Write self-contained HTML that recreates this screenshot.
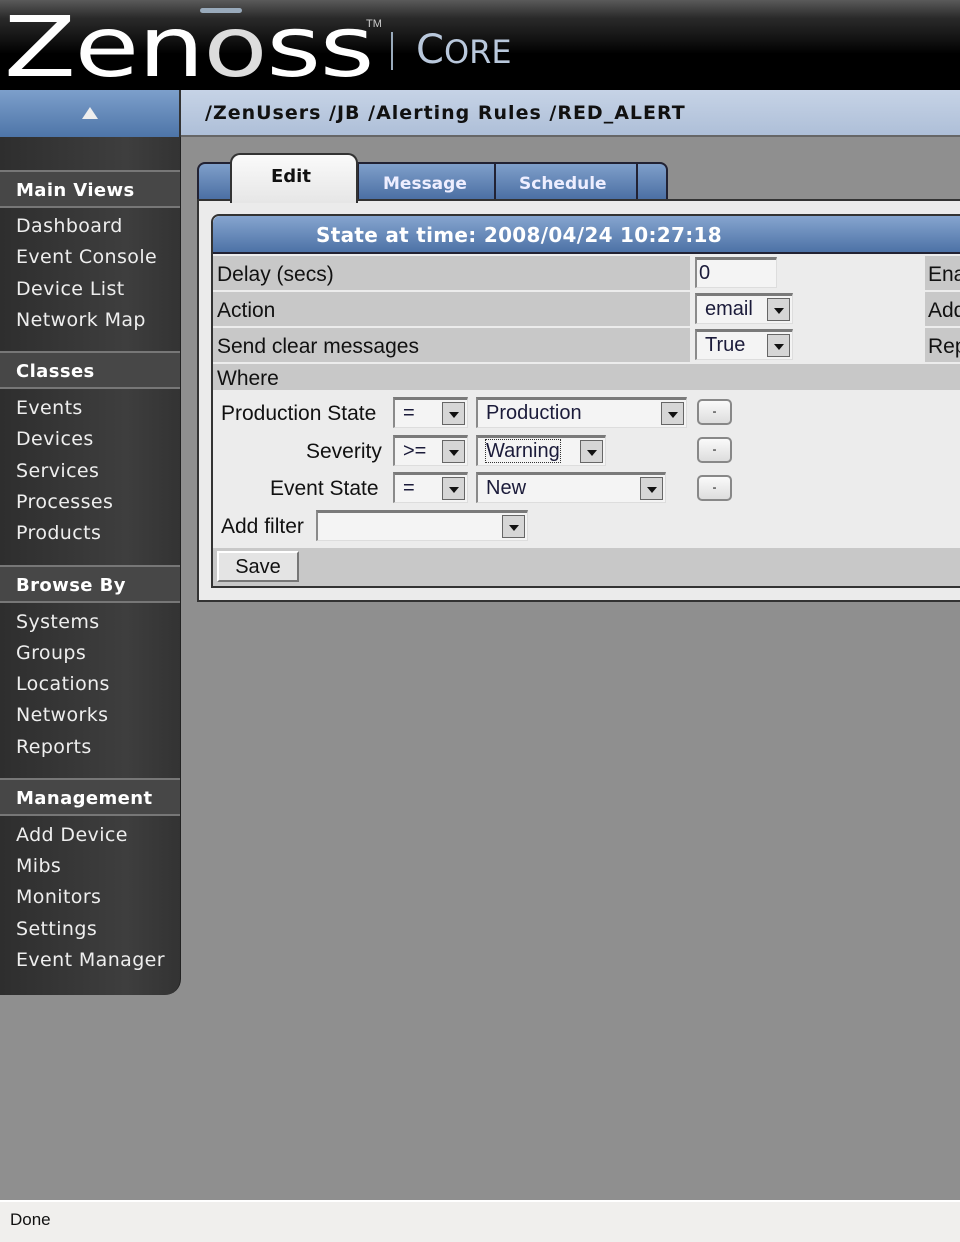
<!DOCTYPE html>
<html><head><meta charset="utf-8"><style>
*{margin:0;padding:0;box-sizing:border-box}
body{width:960px;height:1242px;position:relative;overflow:hidden;background:#8f8f8f;font-family:"Liberation Sans",sans-serif}
.a{position:absolute}
#hdr{left:0;top:0;width:960px;height:90px;background:linear-gradient(#5a5a5a 0%,#2a2a2a 20%,#111 45%,#000 60%,#000 100%)}
#side{left:0;top:137px;width:181px;height:858px;background:linear-gradient(90deg,#2e2e2e,#3e3e3e 70%,#333);border-bottom-right-radius:16px;border-right:1px solid #222;font-family:"DejaVu Sans",sans-serif;color:#eee}
.sh{position:absolute;left:0;width:180px;height:38px;background:#474747;border-top:2px solid #777;border-bottom:2px solid #777;font-weight:bold;font-size:18px;padding:8px 0 0 16px;color:#fff;letter-spacing:0.4px}
.si{position:absolute;left:16px;font-size:19px;color:#eee;letter-spacing:0.4px;margin-top:1px}
.sel{position:absolute;height:31px;background:#f4f4f4;border-top:3px solid #7a7a7a;border-left:2px solid #8a8a8a;border-right:1px solid #ddd;border-bottom:1px solid #ddd;font-size:20px;color:#1b1b3a;padding:2px 0 0 8px}
.arr{position:absolute;right:2px;top:2px;width:23px;height:23px;background:#d6d6d6;border:1px solid #666}
.arr:after{content:"";position:absolute;left:6px;top:9px;border-left:5px solid transparent;border-right:5px solid transparent;border-top:6px solid #111}
.btn{position:absolute;left:697px;width:35px;height:26px;border:2px solid #888;border-radius:5px;background:linear-gradient(#fafafa,#ddd);font-size:12px;text-align:center;line-height:20px}
.lbl{position:absolute;font-size:21px;color:#111;margin-top:1px}
</style></head><body>
<div id="hdr" class="a">
<div class="a" style="left:4px;top:2px;font-size:84px;color:#fff;font-family:'DejaVu Sans',sans-serif;line-height:90px;transform:scaleX(1.25);transform-origin:0 0;letter-spacing:-1px">Zen<span style="color:#ddd">o</span>ss</div>
<div class="a" style="left:200px;top:8px;width:42px;height:5px;background:#9ab;border-radius:3px"></div>
<div class="a" style="left:366px;top:18px;font-size:11px;color:#ccc">TM</div>
<div class="a" style="left:391px;top:32px;width:2px;height:38px;background:#9ab"></div>
<div class="a" style="left:416px;top:27px;font-size:40px;color:#b9c8dc;font-family:'DejaVu Sans',sans-serif">C<span style="font-size:32px">ORE</span></div>
</div>
<div class="a" style="left:0;top:90px;width:181px;height:47px;background:linear-gradient(#7d9fcb,#4e75a8);border-right:2px solid #333"></div>
<div class="a" style="left:82px;top:107px;border-left:8px solid transparent;border-right:8px solid transparent;border-bottom:12px solid #eee"></div>
<div class="a" style="left:181px;top:90px;width:779px;height:47px;background:linear-gradient(#c6d3e6,#aebfd8);border-bottom:2px solid #666"></div>
<div class="a" style="left:205px;top:102px;font-family:'DejaVu Sans',sans-serif;font-weight:bold;font-size:19px;letter-spacing:1px;color:#111">/ZenUsers /JB /Alerting Rules /RED_ALERT</div>
<div id="side" class="a">
<div class="sh" style="top:33px">Main Views</div>
<div class="si" style="top:77px">Dashboard</div><div class="si" style="top:108px">Event Console</div><div class="si" style="top:140px">Device List</div><div class="si" style="top:171px">Network Map</div>
<div class="sh" style="top:214px">Classes</div>
<div class="si" style="top:259px">Events</div><div class="si" style="top:290px">Devices</div><div class="si" style="top:322px">Services</div><div class="si" style="top:353px">Processes</div><div class="si" style="top:384px">Products</div>
<div class="sh" style="top:428px">Browse By</div>
<div class="si" style="top:473px">Systems</div><div class="si" style="top:504px">Groups</div><div class="si" style="top:535px">Locations</div><div class="si" style="top:566px">Networks</div><div class="si" style="top:598px">Reports</div>
<div class="sh" style="top:641px">Management</div>
<div class="si" style="top:686px">Add Device</div><div class="si" style="top:717px">Mibs</div><div class="si" style="top:748px">Monitors</div><div class="si" style="top:780px">Settings</div><div class="si" style="top:811px">Event Manager</div>
</div>
<div class="a" style="left:197px;top:162px;width:471px;height:40px;background:linear-gradient(#7f9fca,#4a6ea2);border:2px solid #223;border-radius:8px 8px 0 0"></div>
<div class="a" style="left:357px;top:164px;width:2px;height:36px;background:#223"></div>
<div class="a" style="left:494px;top:164px;width:2px;height:36px;background:#223"></div>
<div class="a" style="left:636px;top:164px;width:2px;height:36px;background:#223"></div>
<div class="a" style="left:383px;top:174px;font-family:'DejaVu Sans',sans-serif;font-weight:bold;font-size:17px;color:#eef">Message</div>
<div class="a" style="left:519px;top:174px;font-family:'DejaVu Sans',sans-serif;font-weight:bold;font-size:17px;color:#eef">Schedule</div>
<div class="a" style="left:197px;top:199px;width:770px;height:403px;background:#ebebeb;border:2px solid #333;border-right:none"></div>
<div class="a" style="left:230px;top:153px;width:128px;height:50px;background:linear-gradient(#fafafa,#e6e6e6);border:2px solid #333;border-bottom:none;border-radius:10px 10px 0 0"></div>
<div class="a" style="left:271px;top:166px;font-family:'DejaVu Sans',sans-serif;font-weight:bold;font-size:18px;color:#111">Edit</div>
<div class="a" style="left:211px;top:214px;width:760px;height:374px;background:#ececec;border:2px solid #333;border-right:none;border-radius:8px 0 0 0"></div>
<div class="a" style="left:213px;top:216px;width:750px;height:38px;background:linear-gradient(#86a5cf,#4d72a6);border-bottom:2px solid #223;border-radius:7px 0 0 0"></div>
<div class="a" style="left:316px;top:223px;font-family:'DejaVu Sans',sans-serif;font-weight:bold;font-size:20px;letter-spacing:0.3px;color:#fff">State at time: 2008/04/24 10:27:18</div>
<div class="a" style="left:213px;top:256px;width:477px;height:34px;background:#c8c8c8"></div>
<div class="a" style="left:213px;top:292px;width:477px;height:34px;background:#c8c8c8"></div>
<div class="a" style="left:213px;top:328px;width:477px;height:34px;background:#c8c8c8"></div>
<div class="a" style="left:925px;top:256px;width:40px;height:34px;background:#c8c8c8"></div>
<div class="a" style="left:925px;top:292px;width:40px;height:34px;background:#c8c8c8"></div>
<div class="a" style="left:925px;top:328px;width:40px;height:34px;background:#c8c8c8"></div>
<div class="a" style="left:213px;top:364px;width:750px;height:26px;background:#c8c8c8"></div>
<div class="a" style="left:213px;top:548px;width:750px;height:38px;background:#c8c8c8"></div>
<div class="lbl" style="left:217px;top:262px">Delay (secs)</div>
<div class="lbl" style="left:217px;top:298px">Action</div>
<div class="lbl" style="left:217px;top:334px">Send clear messages</div>
<div class="lbl" style="left:217px;top:366px">Where</div>
<div class="lbl" style="left:928px;top:262px">Ena</div>
<div class="lbl" style="left:928px;top:298px">Add</div>
<div class="lbl" style="left:928px;top:334px">Rep</div>
<div class="sel" style="left:695px;top:257px;width:82px;padding-left:2px">0</div>
<div class="sel" style="left:695px;top:293px;width:98px">email<div class="arr"></div></div>
<div class="sel" style="left:695px;top:329px;width:98px">True<div class="arr"></div></div>
<div class="lbl" style="left:221px;top:401px">Production State</div>
<div class="lbl" style="left:306px;top:439px">Severity</div>
<div class="lbl" style="left:270px;top:476px">Event State</div>
<div class="lbl" style="left:221px;top:514px">Add filter</div>
<div class="sel" style="left:393px;top:397px;width:75px">=<div class="arr"></div></div>
<div class="sel" style="left:393px;top:435px;width:75px">&gt;=<div class="arr"></div></div>
<div class="sel" style="left:393px;top:472px;width:75px">=<div class="arr"></div></div>
<div class="sel" style="left:476px;top:397px;width:211px">Production<div class="arr"></div></div>
<div class="sel" style="left:476px;top:435px;width:130px"><span style="outline:1px dotted #333">Warning</span><div class="arr"></div></div>
<div class="sel" style="left:476px;top:472px;width:190px">New<div class="arr"></div></div>
<div class="sel" style="left:316px;top:510px;width:212px"><div class="arr"></div></div>
<div class="btn" style="top:399px">-</div>
<div class="btn" style="top:437px">-</div>
<div class="btn" style="top:475px">-</div>
<div class="a" style="left:217px;top:551px;width:82px;height:31px;background:#e4e4e4;border:2px solid;border-color:#fff #777 #777 #fff;font-size:20px;text-align:center;line-height:28px;color:#111">Save</div>
<div class="a" style="left:0;top:1200px;width:960px;height:42px;background:#f0efed;border-top:2px solid #fff"></div>
<div class="a" style="left:10px;top:1210px;font-size:17px;color:#111">Done</div>
</body></html>
